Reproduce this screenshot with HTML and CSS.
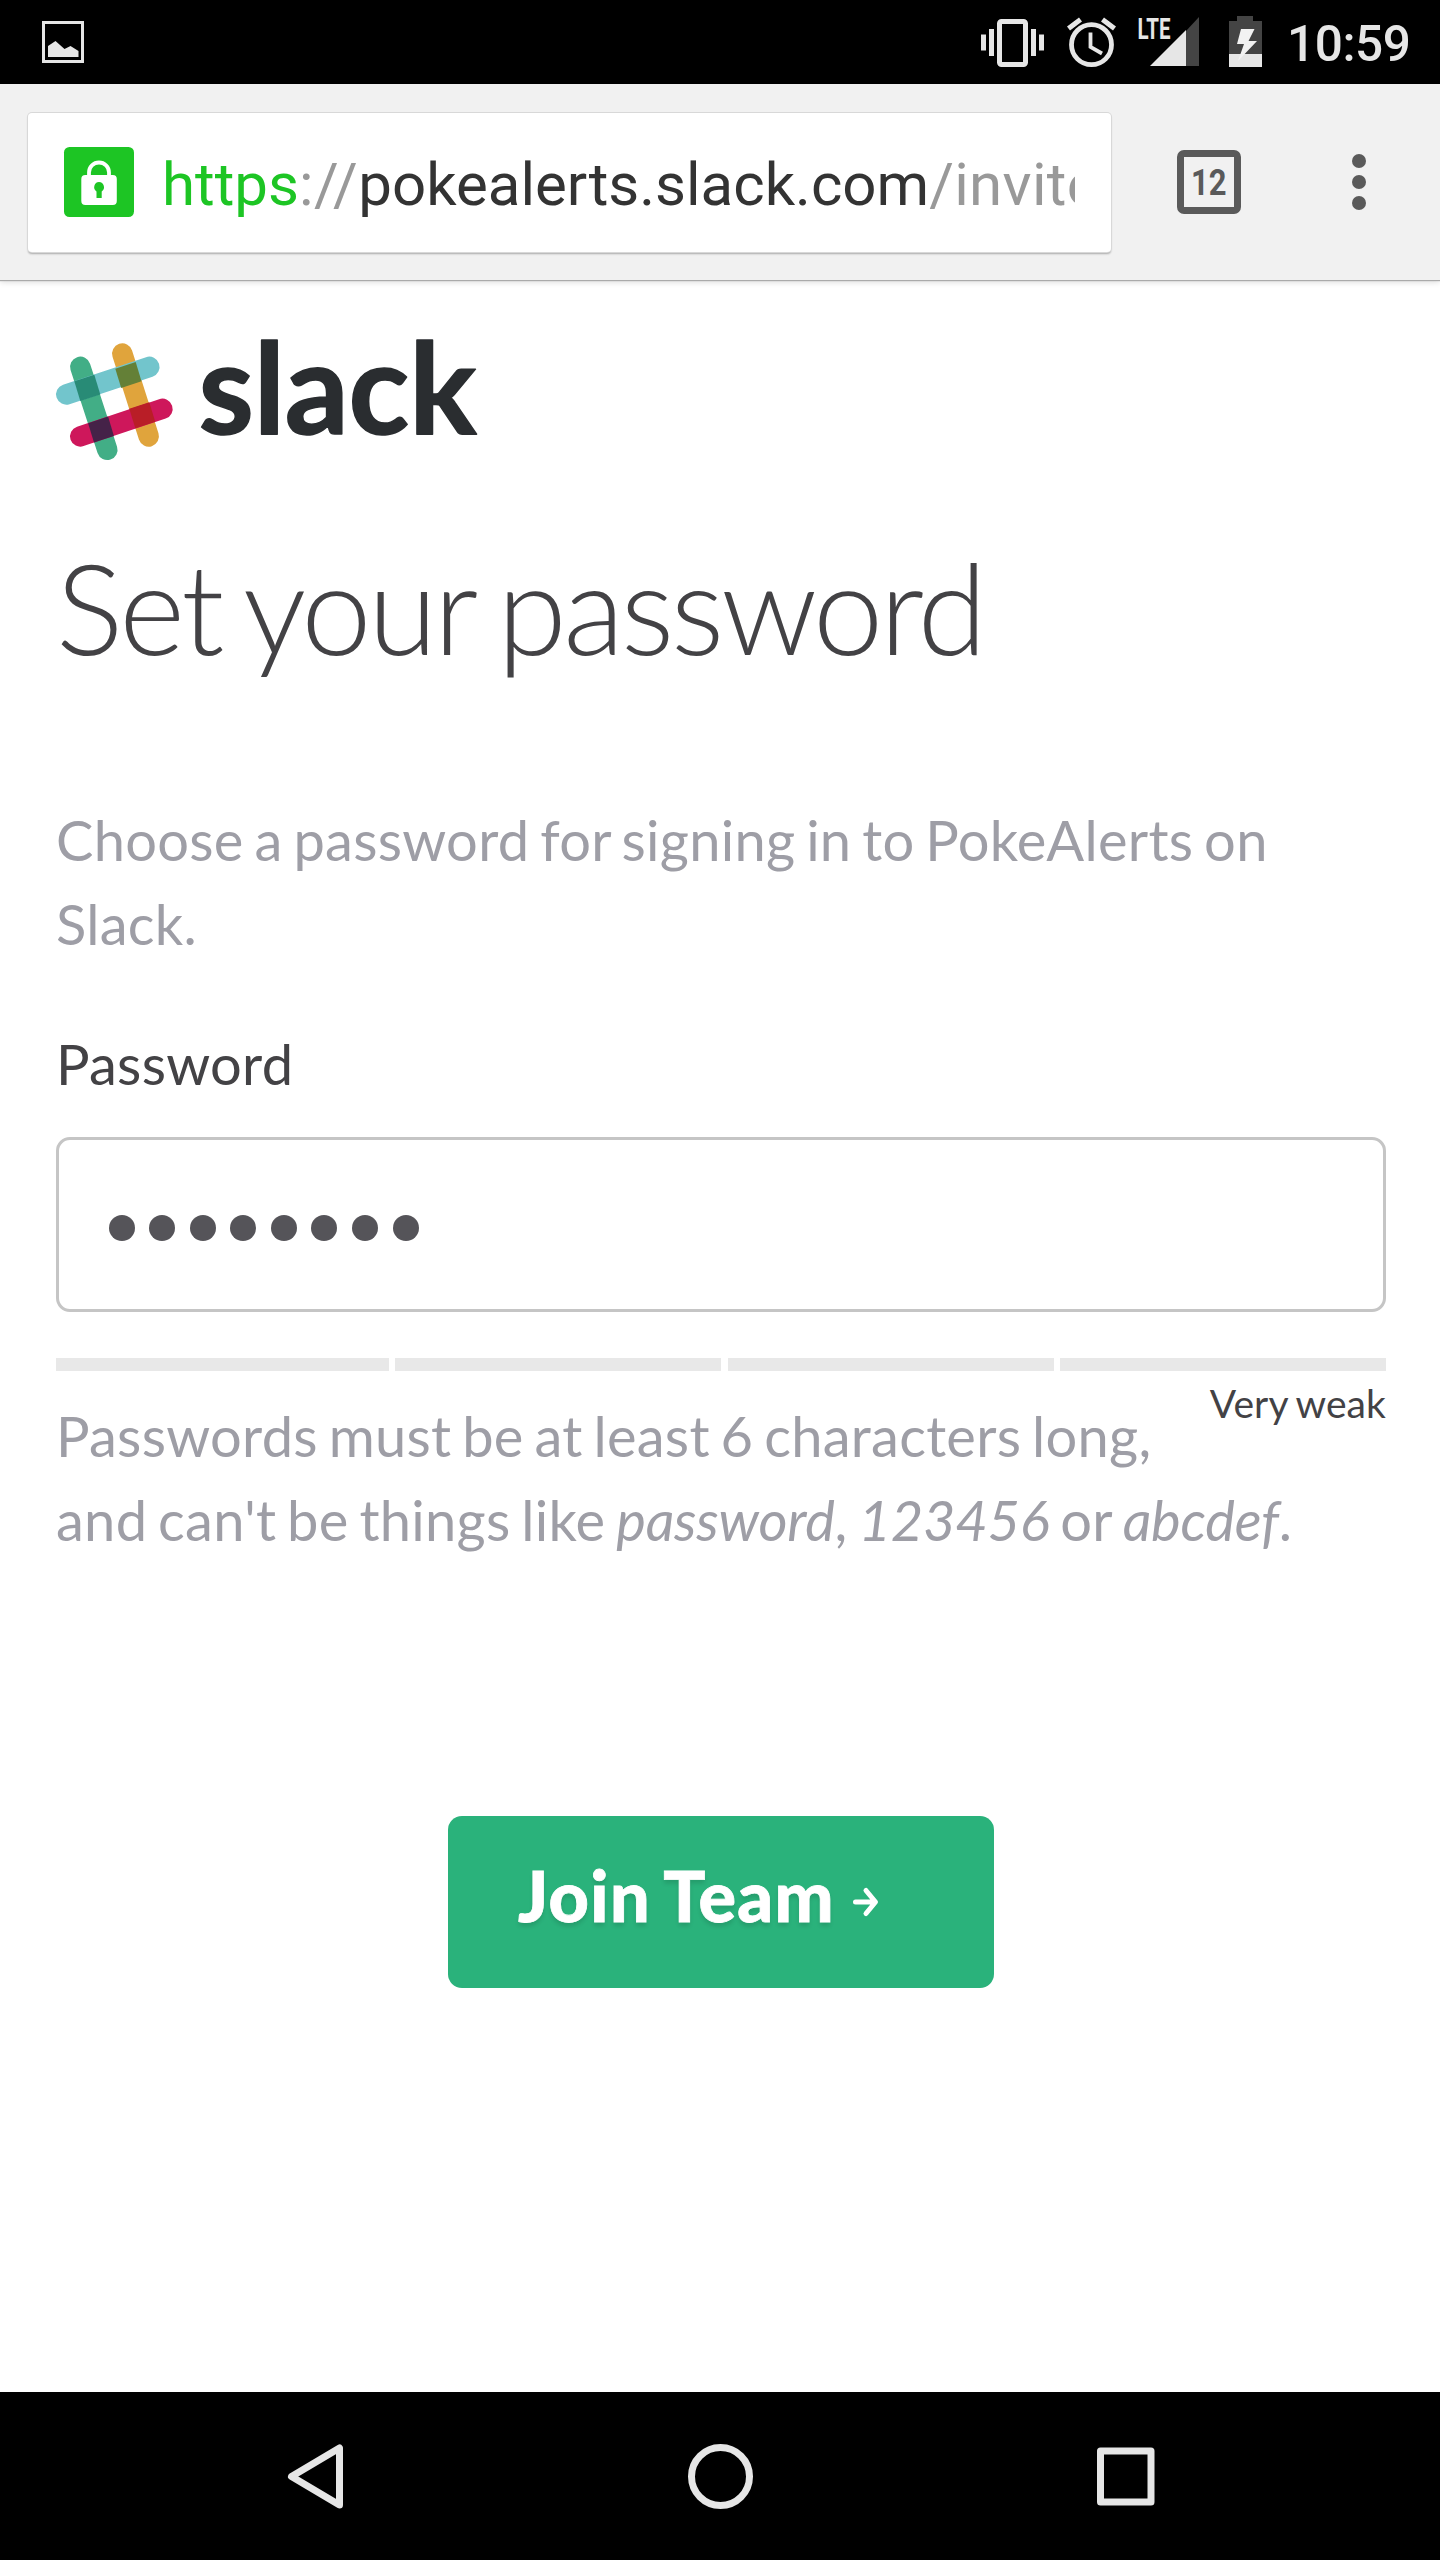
FILE: index.html
```html
<!DOCTYPE html>
<html lang="en">
<head>
<meta charset="utf-8">
<title>Set your password</title>
<link rel="stylesheet" href="styles.css">
</head>
<body>
<div class="screen">
  <header class="status-bar">
    <svg class="notification-icon" viewBox="0 0 42 42" width="42" height="42">
      <rect x="1.5" y="1.5" width="39" height="39" fill="none" stroke="#e6e6e6" stroke-width="3"/>
      <path d="M6 36V25l7.500-5 9 8 6-3 8 5v6z" fill="#e6e6e6"/>
    </svg>
    <svg class="status-icons" viewBox="0 0 290 84" width="290" height="84" fill="#e6e6e6">
      <path d="M1 34.500h5v16H1zM9 29h5v27H9zM51 29h5v27h-5zM59 34.500h5v16h-5z"/>
      <rect x="19.500" y="21.500" width="26" height="43" rx="2" fill="none" stroke="#e6e6e6" stroke-width="5"/>
      <g fill="none" stroke="#e6e6e6">
        <circle cx="111.500" cy="44.700" r="20" stroke-width="4.800"/>
        <path d="M110.500 32.500v14.500l11.500 6.500" stroke-width="3.800"/>
        <path d="M88.500 28.500l12-9M134.500 28.500l-12-9" stroke-width="5"/>
      </g>
      <text class="lte" x="157.500" y="39" textLength="33" lengthAdjust="spacingAndGlyphs">LTE</text>
      <path d="M206 31l13-14v49h-13z" fill="#444"/>
      <path d="M170 66l36-36v36z"/>
      <path d="M249 54V21h8v-5h16v5h9v33z" fill="#444"/>
      <path d="M249 54h33v13h-33z"/>
      <path d="M261 29h13.500l-6 12h8.500l-19 20 6-17h-7z" fill="#f2f2f2"/>
    </svg>
    <span class="clock">10:59</span>
  </header>

  <div class="toolbar">
    <div class="url-box">
      <svg viewBox="0 0 70 70" width="70" height="70">
        <rect width="70" height="70" rx="5.500" fill="#1dc524"/>
        <path d="M25 30v-4.500a10 10 0 0 1 20 0V30" fill="none" stroke="#fff" stroke-width="3.800"/>
        <rect x="17.300" y="28" width="35.500" height="30" rx="4" fill="#fff"/>
        <path d="M35 35a5.200 5.200 0 0 1 2.700 9.500V51h-5.200v-6.500A5.200 5.200 0 0 1 35 35z" fill="#1dc524"/>
      </svg>
      <div class="url"><span class="scheme">https</span><span class="dim">://</span>pokealerts.slack.com<span class="dim path">/invite</span></div>
    </div>
    <div class="tab-count"><span>12</span></div>
    <div class="overflow"><i></i><i></i><i></i></div>
  </div>

  <main class="page">
    <svg class="logo" viewBox="0 0 430 126" width="430" height="126">
      <g stroke-width="20.500" stroke-linecap="round" fill="none">
        <path d="M66.300 17.600L92.700 100.400" stroke="#e0a43c"/>
        <path d="M24.300 30.900L51.300 113.800" stroke="#42ae86"/>
        <path d="M10.300 58.400L93.300 30.900" stroke="#72c5cc"/>
        <path d="M24.300 100.400L106.400 72.900" stroke="#ce175b"/>
      </g>
      <path d="M59.300 32.700L79.700 26l5.800 19.300L65.200 52z" fill="#648037"/>
      <path d="M18.300 45.300l20-6.600 6 19.700-20 6.600z" fill="#288b76"/>
      <path d="M73.300 72.700l20-6.500 5.900 19.500-19.900 6.600z" fill="#b91e27"/>
      <path d="M32.100 87.300l20-6.700 5.800 19.300-19.900 6.700z" fill="#452248"/>
      <text class="wordmark" x="142.500" y="97.500" textLength="278">slack</text>
    </svg>
    <h1>Set your password</h1>
    <p class="intro">Choose a password for signing in to PokeAlerts on Slack.</p>
    <div class="label">Password</div>
    <div class="field"><i></i><i></i><i></i><i></i><i></i><i></i><i></i><i></i></div>
    <div class="meter"><i></i><i></i><i></i><i></i></div>
    <div class="help">
      <span class="strength">Very weak</span>
      <p>Passwords must be at least 6 characters long,<br>and can't be things like <em>password</em>, <em>123456</em> or <em>abcdef</em>.</p>
    </div>
    <div class="button">
      <span>Join Team</span>
      <svg viewBox="0 0 26 32" width="26" height="32" fill="none" stroke="#fff" stroke-width="5" stroke-linecap="round" stroke-linejoin="round">
        <path d="M2.500 16H22M13 4.500L22.500 16 13 27.500"/>
      </svg>
    </div>
  </main>

  <nav class="nav-bar">
    <svg viewBox="0 0 1440 168" width="1440" height="168" fill="none" stroke="#e6e6e6" stroke-width="7" stroke-linejoin="round">
      <path d="M291.500 84.500L339.500 56v57z"/>
      <circle cx="720.500" cy="84.500" r="29"/>
      <rect x="1100.500" y="59" width="50.500" height="51"/>
    </svg>
  </nav>
</div>
</body>
</html>
```
FILE: styles.css
```css
* { box-sizing: border-box; }
body { margin: 0; background: #fff; }
h1, p { margin: 0; }
svg { display: block; flex: none; overflow: visible; }

.screen {
  width: 1440px;
  height: 2560px;
  display: flex;
  flex-direction: column;
  overflow: hidden;
  background: #fff;
  font-family: Lato, sans-serif;
}

.status-bar {
  flex: none;
  height: 84px;
  padding: 0 25px 0 42px;
  display: flex;
  align-items: center;
  background: #000;
}
.status-icons { margin-left: auto; }
.lte { font: 700 29px Roboto, sans-serif; }
.clock {
  width: 128px;
  margin-left: 17px;
  padding-top: 4px;
  font: 500 49.500px/84px Roboto, sans-serif;
  letter-spacing: -.4px;
  color: #e6e6e6;
  white-space: nowrap;
}

.toolbar {
  flex: none;
  height: 196px;
  padding: 28px 74px 28px 28px;
  display: flex;
  align-items: center;
  background: #f1f1f1;
  box-shadow: 0 1px 1px #aaa, 0 2px 6px rgba(0, 0, 0, .15);
}
.url-box {
  width: 1083px;
  height: 139px;
  padding: 0 36px;
  display: flex;
  align-items: center;
  background: #fff;
  border-radius: 4px;
  box-shadow: 0 0 0 1px #d8d8d8, 0 2px 2px rgba(0, 0, 0, .3);
}
.url {
  flex: 1;
  margin-left: 28px;
  padding-top: 5px;
  overflow: hidden;
  white-space: nowrap;
  font: 400 60px/80px Roboto, sans-serif;
  color: #333;
}
.scheme { color: #1dc524; }
.dim { color: #999; letter-spacing: .6px; }
.path { letter-spacing: .3px; }
.tab-count {
  width: 64px;
  height: 64px;
  margin-left: 66px;
  display: flex;
  align-items: center;
  justify-content: center;
  border: 7px solid #5a5a5a;
  border-radius: 7px;
  font: 700 36px/50px Roboto, sans-serif;
  color: #5a5a5a;
}
.tab-count span { padding-top: 2px; transform: scaleX(.86); }
.overflow {
  margin-left: auto;
  display: flex;
  flex-direction: column;
  gap: 7px;
}
.overflow i {
  width: 14px;
  height: 14px;
  border-radius: 50%;
  background: #5a5a5a;
}

.page {
  flex: 1;
  padding: 56px 54px 0 56px;
  color: #434245;
  letter-spacing: .28px;
  word-spacing: -3.800px;
}
.wordmark {
  font: 700 126px Lato, sans-serif;
  letter-spacing: 0;
  fill: #2a2d30;
  stroke: #2a2d30;
  stroke-width: 1.500px;
  stroke-linejoin: round;
}
h1 {
  margin-top: 75px;
  font-weight: 300;
  font-size: 126px;
  line-height: 140px;
  letter-spacing: -3.500px;
  word-spacing: -5.500px;
  white-space: nowrap;
}
.intro {
  margin-top: 121px;
  font-size: 56px;
  line-height: 84px;
  color: #9e9ea6;
}
.label { margin-top: 56px; font-size: 56px; line-height: 84px; }
.field {
  height: 175px;
  margin-top: 31px;
  padding: 7px 0 0 49.500px;
  display: flex;
  align-items: center;
  gap: 14.600px;
  border: 3.500px solid #c5c5c5;
  border-radius: 14px;
}
.field i {
  width: 26px;
  height: 26px;
  border-radius: 50%;
  background: #555459;
}
.meter {
  height: 13px;
  margin-top: 46px;
  display: grid;
  grid-template-columns: 333px 326px 326px 326px;
  justify-content: space-between;
}
.meter i { background: #e8e8e8; }
.help {
  margin-top: 23px;
  font-size: 56px;
  line-height: 84px;
  color: #9e9ea6;
}
.help em { letter-spacing: -.200px; }
.strength {
  float: right;
  margin-top: -19px;
  font-size: 39px;
  line-height: 56px;
  letter-spacing: .1px;
  word-spacing: -1.500px;
  color: #434245;
}
.button {
  width: 546px;
  height: 172px;
  margin: 254px auto 0;
  padding: 0 0 14px 70px;
  display: flex;
  align-items: center;
  gap: 18px;
  background: #2ab27b;
  border-radius: 14px;
  color: #fff;
  font-weight: 900;
  font-size: 70px;
  letter-spacing: 1.400px;
  -webkit-text-stroke: .8px #fff;
  text-shadow: 0 4px 4px rgba(0, 0, 0, .12);
}
.button svg { margin-top: 14px; }

.nav-bar { flex: none; height: 168px; background: #000; }
```
